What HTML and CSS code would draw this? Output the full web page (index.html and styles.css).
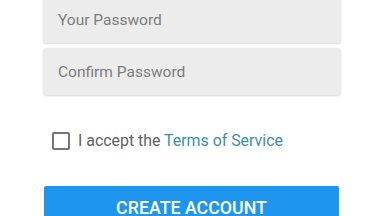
FILE: index.html
```html
<!DOCTYPE html>
<html lang="en">
<head>
    <meta charset="UTF-8">
    <meta name="viewport" content="width=device-width, initial-scale=1.0">
    <title>Create Account</title>
    <link rel="stylesheet" href="styles.css">
</head>
<body>
    <form class="signup">
        <input type="password" class="field" placeholder="Your Password">
        <input type="password" class="field" placeholder="Confirm Password">
        <label class="terms">
            <input type="checkbox" class="check">
            <span>I accept the <a href="#">Terms of Service</a></span>
        </label>
        <button type="button" class="submit">CREATE ACCOUNT</button>
    </form>
</body>
</html>
```

FILE: styles.css
```css
body {
    margin: 0;
    background: #fff;
    font-family: Roboto, "Liberation Sans", sans-serif;
}
.signup {
    display: flex;
    flex-direction: column;
    margin: -4px 43px 0 43px;
}
.field {
    height: 47px;
    box-sizing: border-box;
    margin-bottom: 5px;
    padding: 0 15px;
    border: none;
    border-radius: 3px;
    background: #ececec;
    box-shadow: 0 1px 2px rgba(0, 0, 0, 0.15);
    font-family: inherit;
    font-size: 15.5px;
    color: #333;
}
.field::placeholder {
    color: #7d7d7d;
}
.terms {
    display: flex;
    align-items: center;
    gap: 8px;
    margin: 31px 0 0 9px;
    font-size: 15.9px;
    color: #616161;
}
.check {
    appearance: none;
    width: 18px;
    height: 18px;
    margin: 0;
    border: 2px solid #757575;
    border-radius: 2px;
    box-sizing: border-box;
}
.terms a {
    color: #3b8fa8;
    text-decoration: none;
}
.submit {
    margin-top: 36px;
    height: 44px;
    margin-left: 1px;
    margin-right: 2px;
    border: none;
    border-radius: 2px;
    background: #1e96ef;
    color: #fff;
    font-family: inherit;
    font-size: 17.8px;
    font-weight: 500;
    padding: 0 0 2px 0;
}
```
